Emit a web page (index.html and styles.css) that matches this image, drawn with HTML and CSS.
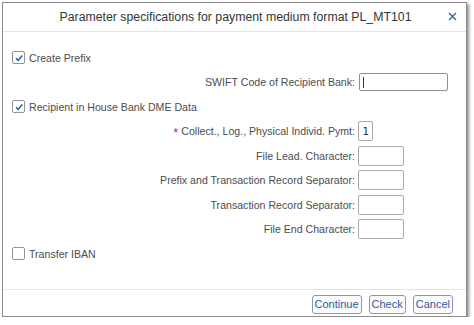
FILE: index.html
```
<!DOCTYPE html>
<html>
<head>
<meta charset="utf-8">
<link rel="stylesheet" href="styles.css">
</head>
<body>
<div class="dialog">
  <div class="header">
    <div class="title">Parameter specifications for payment medium format PL_MT101</div>
    <div class="close">
      <svg width="11" height="11" viewBox="0 0 11 11"><path d="M2 2 L9 9 M9 2 L2 9" stroke="#2b67a8" stroke-width="1.4" fill="none"/></svg>
    </div>
  </div>
  <div class="content">
    <div class="check-row">
      <span class="cb checked"><svg width="10" height="10" viewBox="0 0 10 10"><path d="M2 5.2 L4.2 7.4 L8.2 2.6" stroke="#2b5c9b" stroke-width="1.5" fill="none"/></svg></span>
      <span>Create Prefix</span>
    </div>
    <div class="label">SWIFT Code of Recipient Bank:</div>
    <div class="field"><span class="input wide focus"><span class="caret"></span></span></div>
    <div class="check-row">
      <span class="cb checked"><svg width="10" height="10" viewBox="0 0 10 10"><path d="M2 5.2 L4.2 7.4 L8.2 2.6" stroke="#2b5c9b" stroke-width="1.5" fill="none"/></svg></span>
      <span>Recipient in House Bank DME Data</span>
    </div>
    <div class="label"><span class="req">*</span> Collect., Log., Physical Individ. Pymt:</div>
    <div class="field"><span class="input tiny">1</span></div>
    <div class="label">File Lead. Character:</div>
    <div class="field"><span class="input small"></span></div>
    <div class="label">Prefix and Transaction Record Separator:</div>
    <div class="field"><span class="input small"></span></div>
    <div class="label">Transaction Record Separator:</div>
    <div class="field"><span class="input small"></span></div>
    <div class="label">File End Character:</div>
    <div class="field"><span class="input small"></span></div>
    <div class="check-row">
      <span class="cb"></span>
      <span>Transfer IBAN</span>
    </div>
  </div>
  <div class="footer">
    <button class="btn">Continue</button>
    <button class="btn">Check</button>
    <button class="btn">Cancel</button>
  </div>
</div>
</body>
</html>
```
FILE: styles.css
```
html, body {
  margin: 0;
  padding: 0;
  background: #ffffff;
}
body {
  padding: 2px 0 0 2px;
  font-family: "Liberation Sans", Arial, sans-serif;
  color: #32363a;
}
.dialog {
  width: 463px;
  height: 313px;
  border: 1px solid #8c8c8c;
  background: #fff;
  box-shadow: 2px 2px 3px rgba(0, 0, 0, 0.45);
  display: flex;
  flex-direction: column;
}
.header {
  height: 28px;
  border-bottom: 1px solid #e5e5e5;
  display: flex;
  align-items: center;
  position: relative;
}
.title {
  flex: 1;
  text-align: center;
  font-size: 12.3px;
  color: #32363a;
  padding-left: 2px;
}
.close {
  position: absolute;
  right: 8px;
  top: 8px;
  width: 11px;
  height: 11px;
  display: flex;
}
.content {
  flex: 1;
  padding: 13.5px 0 0 9px;
  display: grid;
  grid-template-columns: 343px 1fr;
  grid-auto-rows: 24.5px;
  column-gap: 3px;
  font-size: 10.6px;
  color: #4a4d50;
}
.check-row {
  grid-column: 1 / -1;
  display: flex;
  align-items: center;
  gap: 4px;
}
.cb {
  width: 11px;
  height: 11px;
  border: 1px solid #8d949b;
  border-radius: 2px;
  display: flex;
  align-items: center;
  justify-content: center;
  background: #fff;
}
.label {
  display: flex;
  align-items: center;
  justify-content: flex-end;
  white-space: nowrap;
}
.req {
  color: #d0302f;
  font-size: 13px;
  margin-right: 3px;
  position: relative;
  top: 1px;
}
.field {
  display: flex;
  align-items: center;
}
.input {
  display: flex;
  align-items: center;
  box-sizing: border-box;
  border: 1px solid #a6abb0;
  border-radius: 2px;
  background: #fff;
  font-size: 12px;
  color: #32363a;
}
.input.wide {
  width: 89px;
  height: 18px;
  margin-left: 1px;
  border-color: #8a9096;
}
.input.tiny {
  width: 15px;
  height: 20px;
  justify-content: center;
  font-family: "DejaVu Sans Mono", "Liberation Mono", monospace;
  font-size: 11px;
}
.input.small {
  width: 46px;
  height: 20px;
}
.caret {
  width: 1px;
  height: 11px;
  background: #32363a;
  margin-left: 3px;
}
.footer {
  border-top: 1px solid #e5e5e5;
  display: flex;
  justify-content: flex-end;
  align-items: flex-start;
  gap: 7px;
  padding: 5px 13px 0 0;
  box-sizing: border-box;
  height: 27px;
}
.btn {
  font-family: "Liberation Sans", Arial, sans-serif;
  font-size: 11px;
  color: #2b5c9b;
  background: #fbfbfb;
  border: 1px solid #7f9cc0;
  border-radius: 3px;
  height: 19px;
  padding: 0 2px;
  margin: 0;
  line-height: 17px;
}
```
